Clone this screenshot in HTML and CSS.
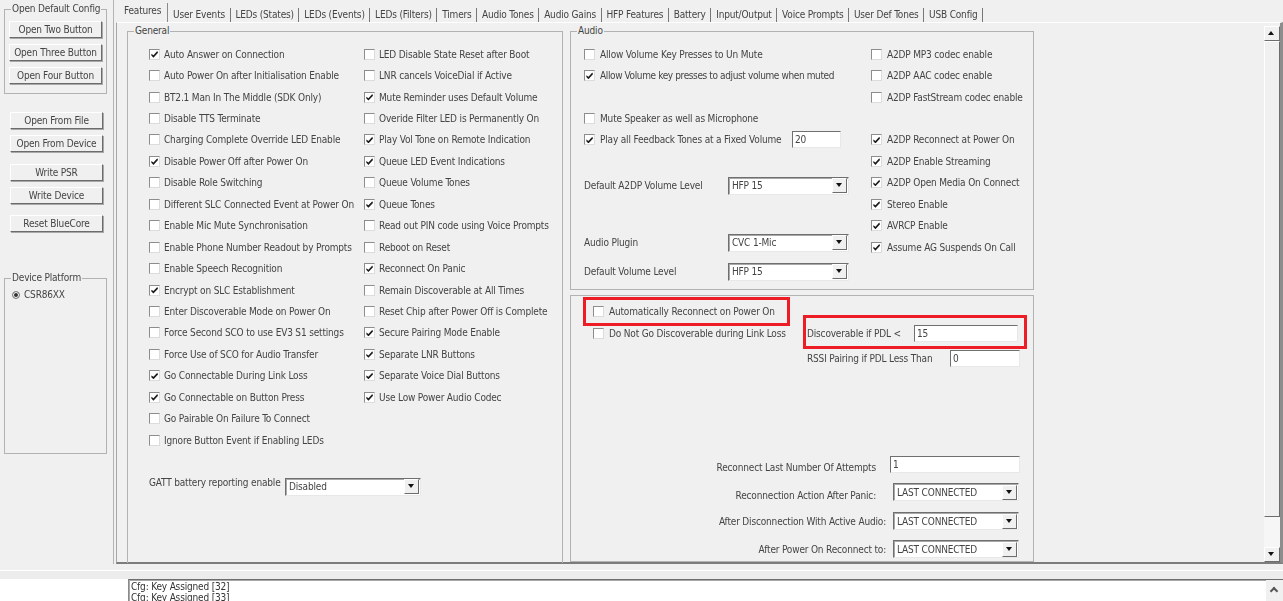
FILE: index.html
```html
<!DOCTYPE html>
<html lang="en">
<head>
<meta charset="utf-8">
<title>Configuration</title>
<link rel="stylesheet" href="styles.css">
</head>
<body>
<div class="app">
  <div class="main">
    <aside class="sidebar">
      <section class="group config-group">
        <span class="group-title">Open Default Config</span>
        <div class="btn-stack">
          <button class="btn">Open Two Button</button>
          <button class="btn">Open Three Button</button>
          <button class="btn">Open Four Button</button>
        </div>
      </section>
      <div class="btn-stack side-a">
        <button class="btn">Open From File</button>
        <button class="btn">Open From Device</button>
      </div>
      <div class="btn-stack side-b">
        <button class="btn">Write PSR</button>
        <button class="btn">Write Device</button>
      </div>
      <div class="btn-stack side-c">
        <button class="btn">Reset BlueCore</button>
      </div>
      <section class="group platform-group">
        <span class="group-title">Device Platform</span>
        <label class="radio-row"><span class="radio"></span>CSR86XX</label>
      </section>
    </aside>
    <div class="tabpanel">
      <nav class="tabs">
        <span class="tab active">Features</span>
        <span class="tab">User Events</span>
        <span class="tab">LEDs (States)</span>
        <span class="tab">LEDs (Events)</span>
        <span class="tab">LEDs (Filters)</span>
        <span class="tab">Timers</span>
        <span class="tab">Audio Tones</span>
        <span class="tab">Audio Gains</span>
        <span class="tab">HFP Features</span>
        <span class="tab">Battery</span>
        <span class="tab">Input/Output</span>
        <span class="tab">Voice Prompts</span>
        <span class="tab">User Def Tones</span>
        <span class="tab">USB Config</span>
      </nav>
      <div class="page">
        <div class="panes">
          <section class="group general">
            <span class="group-title">General</span>
            <div class="general-cols">
              <div class="col col-a">
                <label class="check"><span class="cb on"></span>Auto Answer on Connection</label>
                <label class="check"><span class="cb"></span>Auto Power On after Initialisation Enable</label>
                <label class="check"><span class="cb"></span>BT2.1 Man In The Middle (SDK Only)</label>
                <label class="check"><span class="cb"></span>Disable TTS Terminate</label>
                <label class="check"><span class="cb"></span>Charging Complete Override LED Enable</label>
                <label class="check"><span class="cb on"></span>Disable Power Off after Power On</label>
                <label class="check"><span class="cb"></span>Disable Role Switching</label>
                <label class="check"><span class="cb"></span>Different SLC Connected Event at Power On</label>
                <label class="check"><span class="cb"></span>Enable Mic Mute Synchronisation</label>
                <label class="check"><span class="cb"></span>Enable Phone Number Readout by Prompts</label>
                <label class="check"><span class="cb"></span>Enable Speech Recognition</label>
                <label class="check"><span class="cb on"></span>Encrypt on SLC Establishment</label>
                <label class="check"><span class="cb"></span>Enter Discoverable Mode on Power On</label>
                <label class="check"><span class="cb"></span>Force Second SCO to use EV3 S1 settings</label>
                <label class="check"><span class="cb"></span>Force Use of SCO for Audio Transfer</label>
                <label class="check"><span class="cb on"></span>Go Connectable During Link Loss</label>
                <label class="check"><span class="cb on"></span>Go Connectable on Button Press</label>
                <label class="check"><span class="cb"></span>Go Pairable On Failure To Connect</label>
                <label class="check"><span class="cb"></span>Ignore Button Event if Enabling LEDs</label>
              </div>
              <div class="col col-b">
                <label class="check"><span class="cb"></span>LED Disable State Reset after Boot</label>
                <label class="check"><span class="cb"></span>LNR cancels VoiceDial if Active</label>
                <label class="check"><span class="cb on"></span>Mute Reminder uses Default Volume</label>
                <label class="check"><span class="cb"></span>Overide Filter LED is Permanently On</label>
                <label class="check"><span class="cb on"></span>Play Vol Tone on Remote Indication</label>
                <label class="check"><span class="cb on"></span>Queue LED Event Indications</label>
                <label class="check"><span class="cb"></span>Queue Volume Tones</label>
                <label class="check"><span class="cb on"></span>Queue Tones</label>
                <label class="check"><span class="cb"></span>Read out PIN code using Voice Prompts</label>
                <label class="check"><span class="cb"></span>Reboot on Reset</label>
                <label class="check"><span class="cb on"></span>Reconnect On Panic</label>
                <label class="check"><span class="cb"></span>Remain Discoverable at All Times</label>
                <label class="check"><span class="cb"></span>Reset Chip after Power Off is Complete</label>
                <label class="check"><span class="cb on"></span>Secure Pairing Mode Enable</label>
                <label class="check"><span class="cb on"></span>Separate LNR Buttons</label>
                <label class="check"><span class="cb on"></span>Separate Voice Dial Buttons</label>
                <label class="check"><span class="cb on"></span>Use Low Power Audio Codec</label>
              </div>
            </div>
            <div class="gatt-row">
              <span class="gatt-label">GATT battery reporting enable</span>
              <span class="combo gatt-combo"><span class="combo-value">Disabled</span><span class="combo-btn"></span></span>
            </div>
          </section>
          <div class="right-stack">
            <section class="group audio">
              <span class="group-title">Audio</span>
              <div class="audio-cols">
                <div class="audio-left">
                  <label class="check"><span class="cb"></span>Allow Volume Key Presses to Un Mute</label>
                  <label class="check tight"><span class="cb on"></span>Allow Volume key presses to adjust volume when muted</label>
                  <div class="check"></div>
                  <label class="check"><span class="cb"></span>Mute Speaker as well as Microphone</label>
                  <div class="check feedback"><span class="cb on"></span><span class="feedback-label">Play all Feedback Tones at a Fixed Volume</span><span class="input feedback-input">20</span></div>
                  <div class="field field-a2dp"><span class="field-label">Default A2DP Volume Level</span><span class="combo audio-combo"><span class="combo-value">HFP 15</span><span class="combo-btn"></span></span></div>
                  <div class="field field-plugin"><span class="field-label">Audio Plugin</span><span class="combo audio-combo"><span class="combo-value">CVC 1-Mic</span><span class="combo-btn"></span></span></div>
                  <div class="field field-volume"><span class="field-label">Default Volume Level</span><span class="combo audio-combo"><span class="combo-value">HFP 15</span><span class="combo-btn"></span></span></div>
                </div>
                <div class="audio-right">
                  <label class="check"><span class="cb"></span>A2DP MP3 codec enable</label>
                  <label class="check"><span class="cb"></span>A2DP AAC codec enable</label>
                  <label class="check"><span class="cb"></span>A2DP FastStream codec enable</label>
                  <div class="check"></div>
                  <label class="check"><span class="cb on"></span>A2DP Reconnect at Power On</label>
                  <label class="check"><span class="cb on"></span>A2DP Enable Streaming</label>
                  <label class="check"><span class="cb on"></span>A2DP Open Media On Connect</label>
                  <label class="check"><span class="cb on"></span>Stereo Enable</label>
                  <label class="check"><span class="cb on"></span>AVRCP Enable</label>
                  <label class="check"><span class="cb on"></span>Assume AG Suspends On Call</label>
                </div>
              </div>
            </section>
            <section class="group reconnect">
              <span class="highlight hl-auto"></span>
              <span class="highlight hl-disc"></span>
              <div class="reconnect-top">
                <div class="reconnect-checks">
                  <label class="check"><span class="cb"></span>Automatically Reconnect on Power On</label>
                  <label class="check"><span class="cb"></span>Do Not Go Discoverable during Link Loss</label>
                </div>
                <div class="pdl">
                  <div class="pdl-row"><span class="pdl-label-a">Discoverable if PDL &lt;</span><span class="input pdl-input-a">15</span></div>
                  <div class="pdl-row"><span class="pdl-label-b">RSSI Pairing if PDL Less Than</span><span class="input pdl-input-b">0</span></div>
                </div>
              </div>
              <div class="reconnect-form">
                <div class="form-row row-attempts"><span class="form-label low-a">Reconnect Last Number Of Attempts</span><span class="input attempts-input">1</span></div>
                <div class="form-row row-panic"><span class="form-label low-b">Reconnection Action After Panic:</span><span class="combo form-combo"><span class="combo-value">LAST CONNECTED</span><span class="combo-btn"></span></span></div>
                <div class="form-row row-audio"><span class="form-label near">After Disconnection With Active Audio:</span><span class="combo form-combo"><span class="combo-value">LAST CONNECTED</span><span class="combo-btn"></span></span></div>
                <div class="form-row row-power"><span class="form-label near">After Power On Reconnect to:</span><span class="combo form-combo"><span class="combo-value">LAST CONNECTED</span><span class="combo-btn"></span></span></div>
              </div>
            </section>
          </div>
          <div class="scrollbar">
            <span class="sb-btn"><span class="arrow-up"></span></span>
            <span class="sb-thumb"></span>
            <span class="sb-track"></span>
            <span class="sb-btn"><span class="arrow-down"></span></span>
          </div>
        </div>
      </div>
    </div>
  </div>
  <div class="splitter"></div>
  <div class="log-row">
    <div class="log">
      <div class="log-text">
        <div>Cfg: Key Assigned [32]</div>
        <div>Cfg: Key Assigned [33]</div>
      </div>
      <div class="log-scroll"><span class="chevron"></span></div>
    </div>
  </div>
</div>
</body>
</html>
```

FILE: styles.css
```css
* { box-sizing: border-box; }
html, body { margin: 0; height: 100%; overflow: hidden; }
body {
  background: #fff;
  font-family: "DejaVu Sans Condensed", "DejaVu Sans", sans-serif;
  font-stretch: condensed;
  font-size: 10px;
  letter-spacing: -0.17px;
  color: #444;
}
.app {
  width: 1283px;
  height: 601px;
  display: flex;
  flex-direction: column;
  filter: blur(0.4px);
}
.main {
  height: 564px;
  display: flex;
  background: #f0f0f0;
}
.sidebar {
  width: 114px;
  flex: none;
  padding: 9px 0 0 4px;
  border-right: 1px solid #b4b4b4;
}
.group {
  position: relative;
  border: 1px solid #b2b2b2;
}
.group-title {
  position: absolute;
  top: -7px;
  left: 6px;
  padding: 0 1px;
  line-height: 12px;
  background: #f0f0f0;
  white-space: nowrap;
}
.config-group {
  width: 103px;
  height: 85px;
  padding: 11px 0 0 4px;
}
.btn-stack {
  display: flex;
  flex-direction: column;
  gap: 6px;
}
.btn {
  display: block;
  width: 93px;
  height: 17px;
  padding: 0;
  font: inherit;
  letter-spacing: inherit;
  color: inherit;
  background: #f0f0f0;
  border: 1px solid;
  border-color: #fff #6c6c6c #6c6c6c #fff;
  box-shadow: 1px 1px 0 #a8a8a8;
}
.side-a { margin: 18px 0 0 6px; width: 93px; }
.side-b { margin: 12px 0 0 6px; width: 93px; }
.side-c { margin: 11px 0 0 6px; width: 93px; }
.platform-group {
  width: 103px;
  height: 176px;
  margin-top: 46px;
  padding: 10px 0 0 7px;
}
.radio-row { display: flex; align-items: center; gap: 4px; line-height: 12px; }
.radio {
  width: 8px;
  height: 8px;
  border-radius: 50%;
  border: 1px solid #777;
  background: #fff;
  box-shadow: inset 0 0 0 1px #fff, inset 0 0 0 3px #333;
}
.tabpanel {
  flex: 1;
  margin-left: 2px;
  display: flex;
  flex-direction: column;
}
.tabs {
  height: 22px;
  flex: none;
  display: flex;
  align-items: flex-end;
  padding-left: 4px;
}
.tab {
  height: 14px;
  padding: 0 4.6px 0 4.8px;
  line-height: 14px;
  border-right: 1px solid #777;
  white-space: nowrap;
}
.tab.active {
  height: 19px;
  padding: 1px 6px 0 4px;
  line-height: 14px;
  border-right: 1px solid #8a8a8a;
}
.page {
  flex: 1;
  border-top: 1px solid #fff;
  border-left: 1px solid #a6a6a6;
  border-right: 3px solid #8d8d8d;
  border-bottom: 2px solid #7c7c7c;
  min-height: 0;
}
.panes {
  display: flex;
  padding: 8px 0 0 10px;
  height: 100%;
  position: relative;
}
.general {
  width: 436px;
  height: 532px;
  flex: none;
  border-bottom: 0;
  padding: 11.5px 0 0 21px;
}
.general-cols { display: flex; }
.col-a { width: 215px; flex: none; }
.check {
  height: 21.44px;
  display: flex;
  align-items: center;
  white-space: nowrap;
}
.check.tight { letter-spacing: -0.38px; }
.cb {
  width: 11px;
  height: 11px;
  flex: none;
  margin-right: 4px;
  position: relative;
  background: #fff;
  border: 1px solid #8d8d8d;
  border-right-color: #dcdcdc;
  border-bottom-color: #dcdcdc;
}
.cb.on::after {
  content: "";
  position: absolute;
  inset: 1px;
  background: #1c1c1c;
  clip-path: polygon(5% 45%, 35% 65%, 90% 5%, 100% 30%, 35% 100%, 5% 70%);
}
.gatt-row {
  display: flex;
  align-items: center;
  margin-top: 27px;
}
.gatt-label { width: 136px; margin-top: -9px; }
.combo {
  height: 18px;
  display: flex;
  align-items: center;
  background: #fff;
  border: 1px solid;
  border-color: #6f6f6f #e8e8e8 #e8e8e8 #6f6f6f;
  box-shadow: inset 1px 1px 0 #a8a8a8;
  padding: 1px;
}
.combo-value { flex: 1; padding-left: 2px; white-space: nowrap; overflow: hidden; }
.combo-btn {
  width: 15px;
  height: 15px;
  flex: none;
  position: relative;
  background: #f0f0f0;
  border: 1px solid;
  border-color: #fff #6c6c6c #6c6c6c #fff;
}
.combo-btn::after, .arrow-down {
  content: "";
  position: absolute;
  left: 3px;
  top: 4px;
  border-style: solid;
  border-width: 4px 3.5px 0;
  border-color: #111 transparent transparent;
}
.gatt-combo { width: 136px; }
.right-stack {
  width: 464px;
  margin-left: 7px;
  flex: none;
  display: flex;
  flex-direction: column;
  gap: 5px;
}
.audio { height: 259px; padding: 11.5px 0 0 13px; }
.audio-cols { display: flex; }
.audio-left { width: 287px; flex: none; }
.audio .cb, .reconnect .cb { margin-right: 5px; }
.feedback-label { width: 192px; flex: none; }
.input {
  display: flex;
  align-items: center;
  height: 17px;
  padding: 0 2px;
  background: #fff;
  border: 1px solid;
  border-color: #6f6f6f #e8e8e8 #e8e8e8 #6f6f6f;
}
.feedback-input { width: 49px; }
.field { display: flex; align-items: center; height: 18px; }
.field-label { width: 144px; flex: none; }
.field-a2dp { margin-top: 26px; }
.field-plugin { margin-top: 39px; }
.field-volume { margin-top: 11px; }
.audio-combo { width: 121px; }
.reconnect { height: 267px; padding: 5px 0 0 22px; }
.highlight {
  position: absolute;
  border: 3px solid #ee1c25;
  z-index: 1;
}
.hl-auto { left: 12px; top: 1px; width: 207px; height: 29px; }
.hl-disc { left: 232px; top: 19px; width: 224px; height: 34px; }
.reconnect-top { display: flex; }
.reconnect-checks { width: 214px; flex: none; }
.pdl { display: flex; flex-direction: column; gap: 8px; padding-top: 24px; }
.pdl-row { display: flex; align-items: center; }
.pdl-label-a { width: 107px; flex: none; }
.pdl-label-b { width: 143px; flex: none; }
.pdl-input-a { width: 104px; }
.pdl-input-b { width: 70px; }
.reconnect-form {
  display: flex;
  flex-direction: column;
  align-items: flex-end;
  padding-right: 13px;
}
.form-row { display: flex; align-items: center; }
.row-attempts { margin-top: 88px; }
.row-panic { margin-top: 10px; }
.row-audio { margin-top: 11px; }
.row-power { margin-top: 10px; }
.form-label { white-space: nowrap; }
.form-label.low-a { margin: 7px 14px 0 0; }
.form-label.low-b { margin: 6px 17px 0 0; }
.form-label.near { margin-right: 7px; }
.attempts-input { width: 130px; }
.form-combo { width: 126px; margin-right: 1px; }
.scrollbar {
  position: absolute;
  right: 0;
  top: 3px;
  width: 16px;
  height: 536px;
  display: flex;
  flex-direction: column;
}
.sb-btn {
  position: relative;
  height: 15px;
  flex: none;
  background: #f0f0f0;
  border: 1px solid;
  border-color: #fff #6c6c6c #6c6c6c #fff;
}
.arrow-up {
  position: absolute;
  left: 3px;
  top: 4px;
  border-style: solid;
  border-width: 0 3.5px 4px;
  border-color: transparent transparent #111;
}
.sb-thumb {
  height: 476px;
  flex: none;
  background: #f0f0f0;
  border: 1px solid;
  border-color: #fff #6c6c6c #6c6c6c #fff;
}
.sb-track { flex: 1; background: #f6f6f6; }
.splitter {
  height: 15px;
  flex: none;
  background: linear-gradient(#f0f0f0 0 6px, #fff 6px 7px, #ececec 7px 100%);
}
.log-row {
  flex: 1;
  min-height: 0;
  padding-left: 128px;
  background: #fff;
}
.log {
  height: 100%;
  display: flex;
  border-top: 1px solid #6e6e6e;
  border-left: 1px solid #8a8a8a;
  box-shadow: inset 1px 1px 0 #a8a8a8;
}
.log-text {
  flex: 1;
  padding: 2px 0 0 2px;
  line-height: 10.5px;
  color: #333;
}
.log-scroll {
  width: 17px;
  flex: none;
  background: #f0f0f0;
  position: relative;
}
.chevron {
  position: absolute;
  left: 5px;
  top: 8px;
  width: 6px;
  height: 6px;
  border-left: 2px solid #555;
  border-top: 2px solid #555;
  transform: rotate(45deg);
}
```
